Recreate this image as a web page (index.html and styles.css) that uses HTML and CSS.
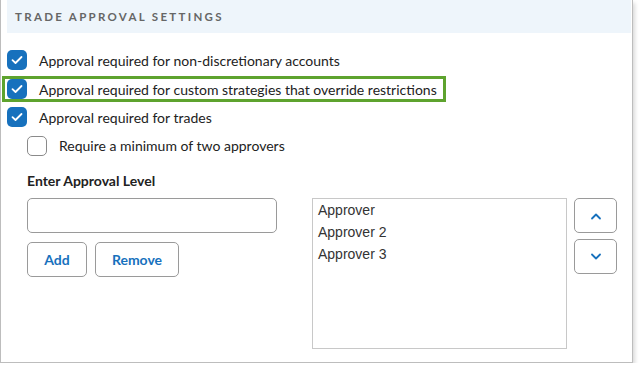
FILE: index.html
```html
<!DOCTYPE html>
<html lang="en">
<head>
    <meta charset="UTF-8">
    <meta name="viewport" content="width=device-width, initial-scale=1.0">
    <title>Trade Approval Settings</title>
    <link rel="stylesheet" href="styles.css">
</head>
<body>
<div class="panel">
    <div class="panel-header">TRADE APPROVAL SETTINGS</div>

    <div class="options">
        <label class="option">
            <span class="check checked"><svg viewBox="0 0 20 20" width="20" height="20"><path d="M5.5 10.2l3 2.8 6-6" fill="none" stroke="#fff" stroke-width="1.8" stroke-linecap="round" stroke-linejoin="round"/></svg></span>
            Approval required for non-discretionary accounts
        </label>
        <label class="option highlight">
            <span class="check checked"><svg viewBox="0 0 20 20" width="20" height="20"><path d="M5.5 10.2l3 2.8 6-6" fill="none" stroke="#fff" stroke-width="1.8" stroke-linecap="round" stroke-linejoin="round"/></svg></span>
            Approval required for custom strategies that override restrictions
        </label>
        <label class="option tall">
            <span class="check checked"><svg viewBox="0 0 20 20" width="20" height="20"><path d="M5.5 10.2l3 2.8 6-6" fill="none" stroke="#fff" stroke-width="1.8" stroke-linecap="round" stroke-linejoin="round"/></svg></span>
            Approval required for trades
        </label>
        <label class="option sub">
            <span class="check"></span>
            Require a minimum of two approvers
        </label>
    </div>

    <div class="levels">
        <div class="field-label">Enter Approval Level</div>
        <div class="level-row">
            <div class="level-left">
                <input type="text" class="level-input">
                <div class="level-buttons">
                    <button class="btn btn-add">Add</button>
                    <button class="btn btn-remove">Remove</button>
                </div>
            </div>
            <div class="approver-list">
                <div class="approver">Approver</div>
                <div class="approver">Approver 2</div>
                <div class="approver">Approver 3</div>
            </div>
            <div class="move-buttons">
                <button class="btn btn-move"><svg viewBox="0 0 12 8" width="12" height="8"><path d="M2 6.5l4-4 4 4" fill="none" stroke="#1771bd" stroke-width="1.8" stroke-linecap="round" stroke-linejoin="round"/></svg></button>
                <button class="btn btn-move"><svg viewBox="0 0 12 8" width="12" height="8"><path d="M2 1.5l4 4 4-4" fill="none" stroke="#1771bd" stroke-width="1.8" stroke-linecap="round" stroke-linejoin="round"/></svg></button>
            </div>
        </div>
    </div>
</div>
</body>
</html>
```

FILE: styles.css
```css
body {
    margin: 0;
    background-color: #fff;
    font-family: Lato, "Open Sans", sans-serif;
    color: #222;
}

.panel {
    box-sizing: border-box;
    width: 633px;
    height: 363px;
    padding: 0 1px 0 6px;
    border: 1px solid #bdbdbd;
    border-top: none;
    background-color: #fff;
    box-shadow: 2px 3px 4px rgba(0, 0, 0, 0.15);
}

.panel-header {
    height: 33px;
    line-height: 33px;
    padding-left: 8px;
    background-color: #eef5fb;
    color: #666;
    font-size: 11.5px;
    font-weight: 700;
    letter-spacing: 2.3px;
}

.options {
    padding-top: 13px;
}

.option {
    display: flex;
    align-items: center;
    gap: 12px;
    height: 28px;
    font-size: 14px;
}

.option.highlight {
    box-sizing: border-box;
    width: 444px;
    height: 26px;
    margin: 2px 0 0 -5px;
    padding-left: 2px;
    border: 3px solid #5ea32e;
}

.option.tall {
    height: 30px;
}

.option.sub {
    height: 27px;
    padding-left: 20px;
}

.check {
    box-sizing: border-box;
    display: flex;
    width: 20px;
    height: 20px;
    flex-shrink: 0;
    border: 1px solid #8a8a8a;
    border-radius: 5px;
    background-color: #fff;
}

.check.checked {
    border: none;
    background-color: #1771bd;
}

.levels {
    padding-left: 20px;
}

.field-label {
    margin-top: 11px;
    line-height: 22px;
    font-size: 14px;
    font-weight: 700;
    color: #222;
}

.level-row {
    display: flex;
    margin-top: 6px;
}

.level-left {
    width: 250px;
    margin-right: 35px;
}

.level-input {
    box-sizing: border-box;
    display: block;
    width: 250px;
    height: 35px;
    margin: 0;
    border: 1px solid #9a9a9a;
    border-radius: 5px;
}

.level-buttons {
    display: flex;
    gap: 8px;
    margin-top: 9px;
}

.btn {
    box-sizing: border-box;
    height: 35px;
    margin: 0;
    border: 1px solid #9a9a9a;
    border-radius: 5px;
    background-color: #fff;
    color: #1771bd;
    font-family: Lato, "Open Sans", sans-serif;
    font-size: 14px;
    font-weight: 700;
    cursor: pointer;
}

.btn-add {
    width: 60px;
}

.btn-remove {
    width: 84px;
}

.approver-list {
    box-sizing: border-box;
    width: 255px;
    height: 151px;
    padding: 0 5px;
    border: 1px solid #c8c8c8;
    font-family: "Liberation Sans", Arial, sans-serif;
    font-size: 14px;
    color: #333;
}

.approver {
    line-height: 22px;
}

.move-buttons {
    display: flex;
    flex-direction: column;
    gap: 6px;
    margin-left: 7px;
}

.btn-move {
    display: flex;
    align-items: center;
    justify-content: center;
    width: 43px;
}
```
